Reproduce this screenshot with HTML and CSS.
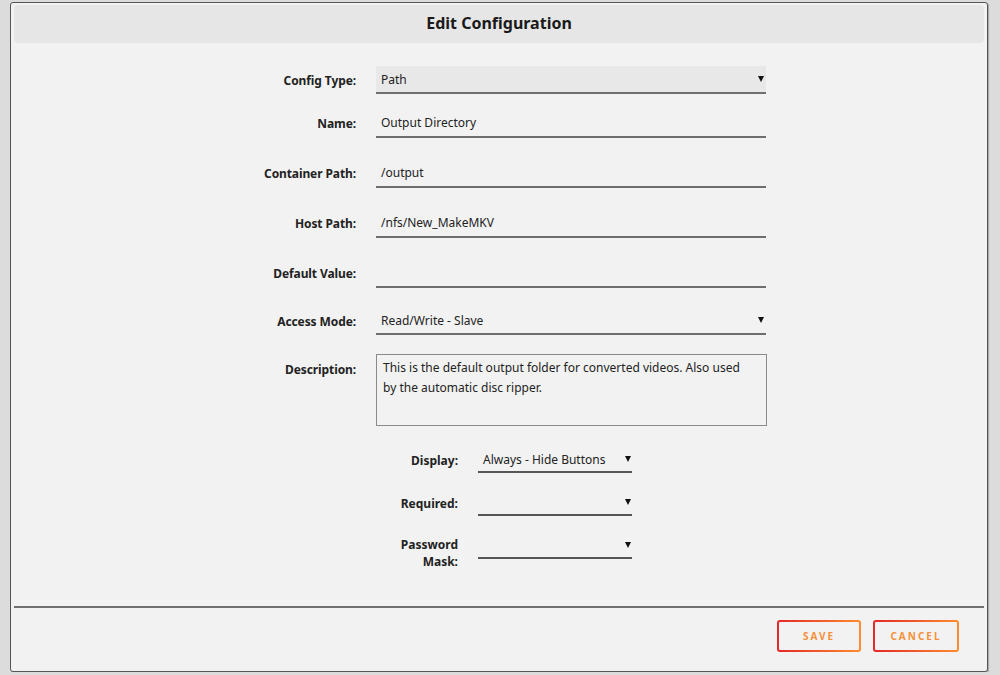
FILE: index.html
```html
<!DOCTYPE html>
<html>
<head>
<meta charset="utf-8">
<link rel="stylesheet" href="styles.css">
</head>
<body>
<div class="dialog">
  <div class="header"><h1 class="title">Edit Configuration</h1></div>
  <div class="content">
    <div class="form">
      <div class="row row-config">
        <label class="label">Config Type:</label>
        <div class="field select shaded"><span>Path</span><span class="arrow"></span></div>
      </div>
      <div class="row">
        <label class="label">Name:</label>
        <div class="field input"><span>Output Directory</span></div>
      </div>
      <div class="row">
        <label class="label">Container Path:</label>
        <div class="field input"><span>/output</span></div>
      </div>
      <div class="row">
        <label class="label">Host Path:</label>
        <div class="field input"><span>/nfs/New_MakeMKV</span></div>
      </div>
      <div class="row row-default">
        <label class="label">Default Value:</label>
        <div class="field input"><span></span></div>
      </div>
      <div class="row row-access">
        <label class="label">Access Mode:</label>
        <div class="field select"><span>Read/Write - Slave</span><span class="arrow"></span></div>
      </div>
      <div class="row row-desc">
        <label class="label label-top">Description:</label>
        <div class="textarea">This is the default output folder for converted videos. Also used by the automatic disc ripper.</div>
      </div>
      <div class="subform">
        <div class="subrow">
          <label class="sublabel">Display:</label>
          <div class="subfield"><span>Always - Hide Buttons</span><span class="arrow"></span></div>
        </div>
        <div class="subrow">
          <label class="sublabel">Required:</label>
          <div class="subfield"><span></span><span class="arrow"></span></div>
        </div>
        <div class="subrow subrow-pw">
          <label class="sublabel">Password Mask:</label>
          <div class="subfield"><span></span><span class="arrow"></span></div>
        </div>
      </div>
    </div>
  </div>
  <div class="footer">
    <button class="btn">SAVE</button>
    <button class="btn">CANCEL</button>
  </div>
</div>
</body>
</html>
```

FILE: styles.css
```css
html, body {
  margin: 0;
  padding: 0;
  background: #dcdcdc;
  font-family: "Noto Sans", "Open Sans", sans-serif;
  color: #222;
}
body {
  padding: 2px 0 0 10px;
}
.dialog {
  box-sizing: border-box;
  width: 978px;
  height: 670px;
  background: #f2f2f2;
  border: 1px solid #555;
  border-radius: 3px;
  box-shadow: 1px 1px 1px rgba(0,0,0,0.25);
  padding: 2px 3px 0 3px;
  display: flex;
  flex-direction: column;
}
.header {
  height: 38px;
  background: #e6e6e6;
  border-radius: 4px;
  display: flex;
  align-items: center;
  justify-content: center;
}
.title {
  margin: 0 0 2px 0;
  font-size: 16px;
  font-weight: 700;
  color: #1a1a1a;
}
.content {
  flex: 1;
  padding-top: 23px;
}
.form {
  margin-left: 217px;
  display: flex;
  flex-direction: column;
}
.row {
  display: flex;
  align-items: center;
  margin-bottom: 20px;
}
.row-config { margin-bottom: 14px; }
.row-default { margin-bottom: 19px; }
.row-access { margin-bottom: 19px; }
.row-desc { align-items: flex-start; margin-bottom: 21px; }
.label {
  width: 125px;
  text-align: right;
  font-size: 12px;
  font-weight: 700;
  color: #222;
  margin-right: 20px;
  letter-spacing: -0.1px;
}
.label-top { padding-top: 7px; }
.field {
  box-sizing: border-box;
  width: 390px;
  height: 30px;
  border-bottom: 2px solid #6e6e6e;
  display: flex;
  align-items: center;
  justify-content: space-between;
  padding: 0 2px 0 5px;
  font-size: 12px;
  color: #222;
}
.select { height: 28px; }
.shaded { background: #e8e8e8; }
.arrow {
  width: 0;
  height: 0;
  border-left: 3px solid transparent;
  border-right: 3px solid transparent;
  border-top: 6px solid #111;
}
.textarea {
  box-sizing: border-box;
  width: 391px;
  height: 72px;
  border: 1px solid #8a8a8a;
  padding: 3px 18px 4px 6px;
  font-size: 12px;
  line-height: 20px;
  color: #222;
}
.subform {
  margin-left: 167px;
  display: flex;
  flex-direction: column;
}
.subrow {
  display: flex;
  align-items: center;
  margin-bottom: 17px;
}
.subrow-pw { align-items: flex-start; }
.sublabel {
  width: 60px;
  text-align: right;
  font-size: 12px;
  font-weight: 700;
  line-height: 17px;
  margin-right: 20px;
  color: #222;
}
.subrow-pw .sublabel { padding-top: 3px; }
.subfield {
  box-sizing: border-box;
  width: 154px;
  height: 26px;
  border-bottom: 2px solid #555;
  display: flex;
  align-items: center;
  justify-content: space-between;
  padding: 0 1px 0 5px;
  font-size: 12px;
  color: #222;
}
.footer {
  border-top: 2px solid #707070;
  height: 65px;
  display: flex;
  justify-content: flex-end;
  align-items: flex-start;
  padding: 12px 25px 0 0;
  gap: 12px;
  box-sizing: border-box;
}
.btn {
  width: 84px;
  height: 32px;
  border: 2px solid transparent;
  border-radius: 3px;
  background: linear-gradient(#f2f2f2, #f2f2f2) padding-box,
              linear-gradient(90deg, #e22828, #ff8c2f) border-box;
  color: #f5903a;
  font-family: "Noto Sans", "Open Sans", sans-serif;
  font-size: 10px;
  font-weight: 700;
  letter-spacing: 2px;
  padding: 0;
  cursor: pointer;
}
.btn:last-child { width: 86px; }
```
